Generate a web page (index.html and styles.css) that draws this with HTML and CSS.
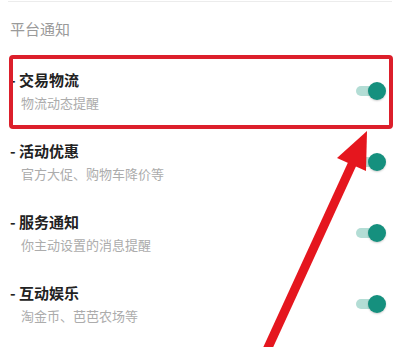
FILE: index.html
```html
<!DOCTYPE html>
<html lang="zh-CN">
<head>
    <meta charset="UTF-8">
    <meta name="viewport" content="width=device-width, initial-scale=1.0">
    <title>平台通知</title>
    <link rel="stylesheet" href="styles.css">
</head>
<body>
    <div class="page">
        <div class="top-line"></div>
        <h3 class="section-title">平台通知</h3>
        <ul class="notice-list">
            <li class="notice">
                <div class="notice-text">
                    <h4>- 交易物流</h4>
                    <p>物流动态提醒</p>
                </div>
                <span class="toggle"><span class="knob"></span></span>
            </li>
            <li class="notice">
                <div class="notice-text">
                    <h4>- 活动优惠</h4>
                    <p>官方大促、购物车降价等</p>
                </div>
                <span class="toggle"><span class="knob"></span></span>
            </li>
            <li class="notice">
                <div class="notice-text">
                    <h4>- 服务通知</h4>
                    <p>你主动设置的消息提醒</p>
                </div>
                <span class="toggle"><span class="knob"></span></span>
            </li>
            <li class="notice">
                <div class="notice-text">
                    <h4>- 互动娱乐</h4>
                    <p>淘金币、芭芭农场等</p>
                </div>
                <span class="toggle"><span class="knob"></span></span>
            </li>
        </ul>

        <!-- annotation drawn over the screenshot -->
        <svg class="mark" width="400" height="347" viewBox="0 0 400 347">
            <rect x="11" y="57" width="380" height="70" rx="2" fill="none" stroke="#dc1f2b" stroke-width="4"/>
            <line x1="266" y1="352" x2="354" y2="160" stroke="#e5161e" stroke-width="9"/>
            <polygon points="367,131 337,158 366,171" fill="#e5161e"/>
        </svg>
    </div>
</body>
</html>
```

FILE: styles.css
```css
* {
    padding: 0;
    margin: 0;
    box-sizing: border-box;
}
body {
    background: #fff;
    font-family: "Noto Sans CJK SC", "Noto Sans", sans-serif;
}
.page {
    position: relative;
    width: 400px;
    height: 347px;
    overflow: hidden;
}
.top-line {
    height: 1px;
    margin: 1px 8px 0;
    background: #ececec;
}
.section-title {
    margin-top: 17px;
    padding-left: 10px;
    font-size: 15px;
    line-height: 20px;
    font-weight: 400;
    color: #9a9a9a;
}
.notice-list {
    list-style: none;
    margin-top: 19px;
    padding: 0 14px 0 10px;
}
.notice {
    display: flex;
    justify-content: space-between;
    align-items: flex-start;
    height: 71px;
    padding-top: 12px;
}
.notice h4 {
    font-size: 15px;
    line-height: 20px;
    font-weight: 700;
    color: #222;
}
.notice p {
    margin-top: 4px;
    margin-left: 11px;
    font-size: 13px;
    line-height: 18px;
    color: #acacac;
}
.toggle {
    position: relative;
    width: 30px;
    height: 18px;
    margin-top: 12px;
}
.toggle::before {
    content: "";
    position: absolute;
    left: 0;
    right: 6px;
    top: 4px;
    height: 10px;
    border-radius: 5px;
    background: #b3ddd5;
}
.knob {
    position: absolute;
    right: 0;
    top: 0;
    width: 18px;
    height: 18px;
    border-radius: 50%;
    background: #15907e;
    box-shadow: 0 1px 2px rgba(0, 0, 0, 0.2);
}
.mark {
    position: absolute;
    left: 0;
    top: 0;
}
```
